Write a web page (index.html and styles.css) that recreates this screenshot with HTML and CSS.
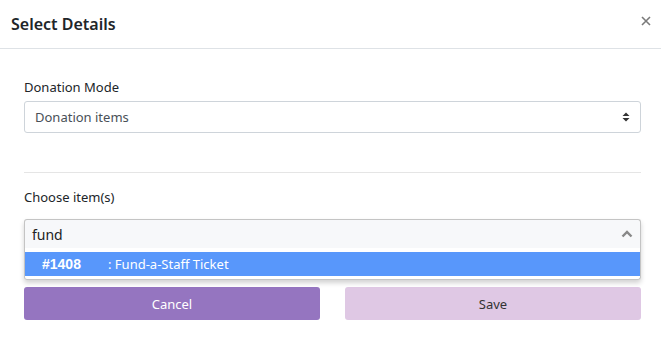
FILE: index.html
```html
<!DOCTYPE html>
<html>
<head>
  <title>Select Details</title>
  <link rel="stylesheet" href="styles.css">
</head>
<body>
  <div class="modal">
    <div class="modal-header">
      <h4 class="modal-title">Select Details</h4>
      <span class="close">
        <svg width="10" height="10" viewBox="0 0 10 10"><path d="M1 1 L9 9 M9 1 L1 9" stroke="#7a7a7a" stroke-width="1.6"/></svg>
      </span>
    </div>

    <div class="modal-body">
      <label class="field-label">Donation Mode</label>
      <div class="select-box">
        <span>Donation items</span>
        <svg width="8" height="10" viewBox="0 0 8 10"><path d="M4 0.5 L7.5 4 L0.5 4 Z M4 9.5 L7.5 6 L0.5 6 Z" fill="#333"/></svg>
      </div>

      <hr class="divider">

      <label class="field-label second">Choose item(s)</label>
      <div class="chosen">
        <div class="chosen-search">
          <span>fund</span>
          <svg width="12" height="8" viewBox="0 0 12 8"><path d="M1.5 6.5 L6 2 L10.5 6.5" fill="none" stroke="#888" stroke-width="2.4"/></svg>
        </div>
        <div class="chosen-drop">
          <div class="result highlighted">
            <span class="code">#1408</span>
            <span class="name">: Fund-a-Staff Ticket</span>
          </div>
        </div>
      </div>

      <div class="buttons">
        <button class="btn cancel">Cancel</button>
        <button class="btn save">Save</button>
      </div>
    </div>
  </div>
</body>
</html>
```

FILE: styles.css
```css
body{
  margin: 0;
  background: #fff;
  font-family: "Noto Sans", "Open Sans", sans-serif;
  font-size: 13px;
  color: #212529;
}
.modal{
  width: 661px;
}
.modal-header{
  display: flex;
  justify-content: space-between;
  align-items: center;
  height: 48px;
  padding: 0 10px 0 11px;
  border-bottom: 1px solid #dee2e6;
}
.modal-title{
  margin: 0;
  font-size: 16px;
  font-weight: 600;
  color: #212529;
}
.close{
  display: flex;
  margin-top: -6px;
}
.modal-body{
  padding: 28px 20px 0 24px;
}
.field-label{
  display: block;
  line-height: 20px;
  margin-bottom: 4px;
}
.field-label.second{
  margin-bottom: 12px;
}
.select-box{
  display: flex;
  justify-content: space-between;
  align-items: center;
  height: 30px;
  padding: 0 10px;
  border: 1px solid #ced4da;
  border-radius: 3px;
  color: #495057;
}
.divider{
  border: 0;
  border-top: 1px solid #e5e5e5;
  margin: 39px 0 14px 0;
}
.chosen{
  position: relative;
  box-shadow: 0 3px 5px rgba(0, 0, 0, 0.18);
  border-radius: 3px;
}
.chosen-search{
  display: flex;
  justify-content: space-between;
  align-items: center;
  height: 28px;
  padding: 0 7px 0 7px;
  border: 1px solid #c4c4c4;
  border-bottom: 0;
  border-radius: 3px 3px 0 0;
  background: #f7f8fa;
  color: #222;
  font-size: 14px;
}
.chosen-drop{
  background: #fff;
  border: 1px solid #c4c4c4;
  border-top: 0;
  padding: 4px 0 3px 0;
  border-radius: 0 0 3px 3px;
}
.result{
  display: flex;
  align-items: center;
  height: 24px;
  padding-left: 17px;
}
.result.highlighted{
  background: #5897fb;
  color: #fff;
}
.code{
  font-family: "Liberation Sans", Arial, sans-serif;
  font-weight: bold;
  font-size: 14px;
  width: 66px;
}
.name{
  font-size: 13px;
}
.buttons{
  display: flex;
  gap: 25px;
  margin-top: 7px;
}
.btn{
  flex: 1;
  height: 33px;
  border: 0;
  border-radius: 3px;
  font-family: "Noto Sans", "Open Sans", sans-serif;
  font-size: 13px;
}
.cancel{
  background: #9575c0;
  color: #fff;
}
.save{
  background: #dfc8e4;
  color: #333;
}
```
